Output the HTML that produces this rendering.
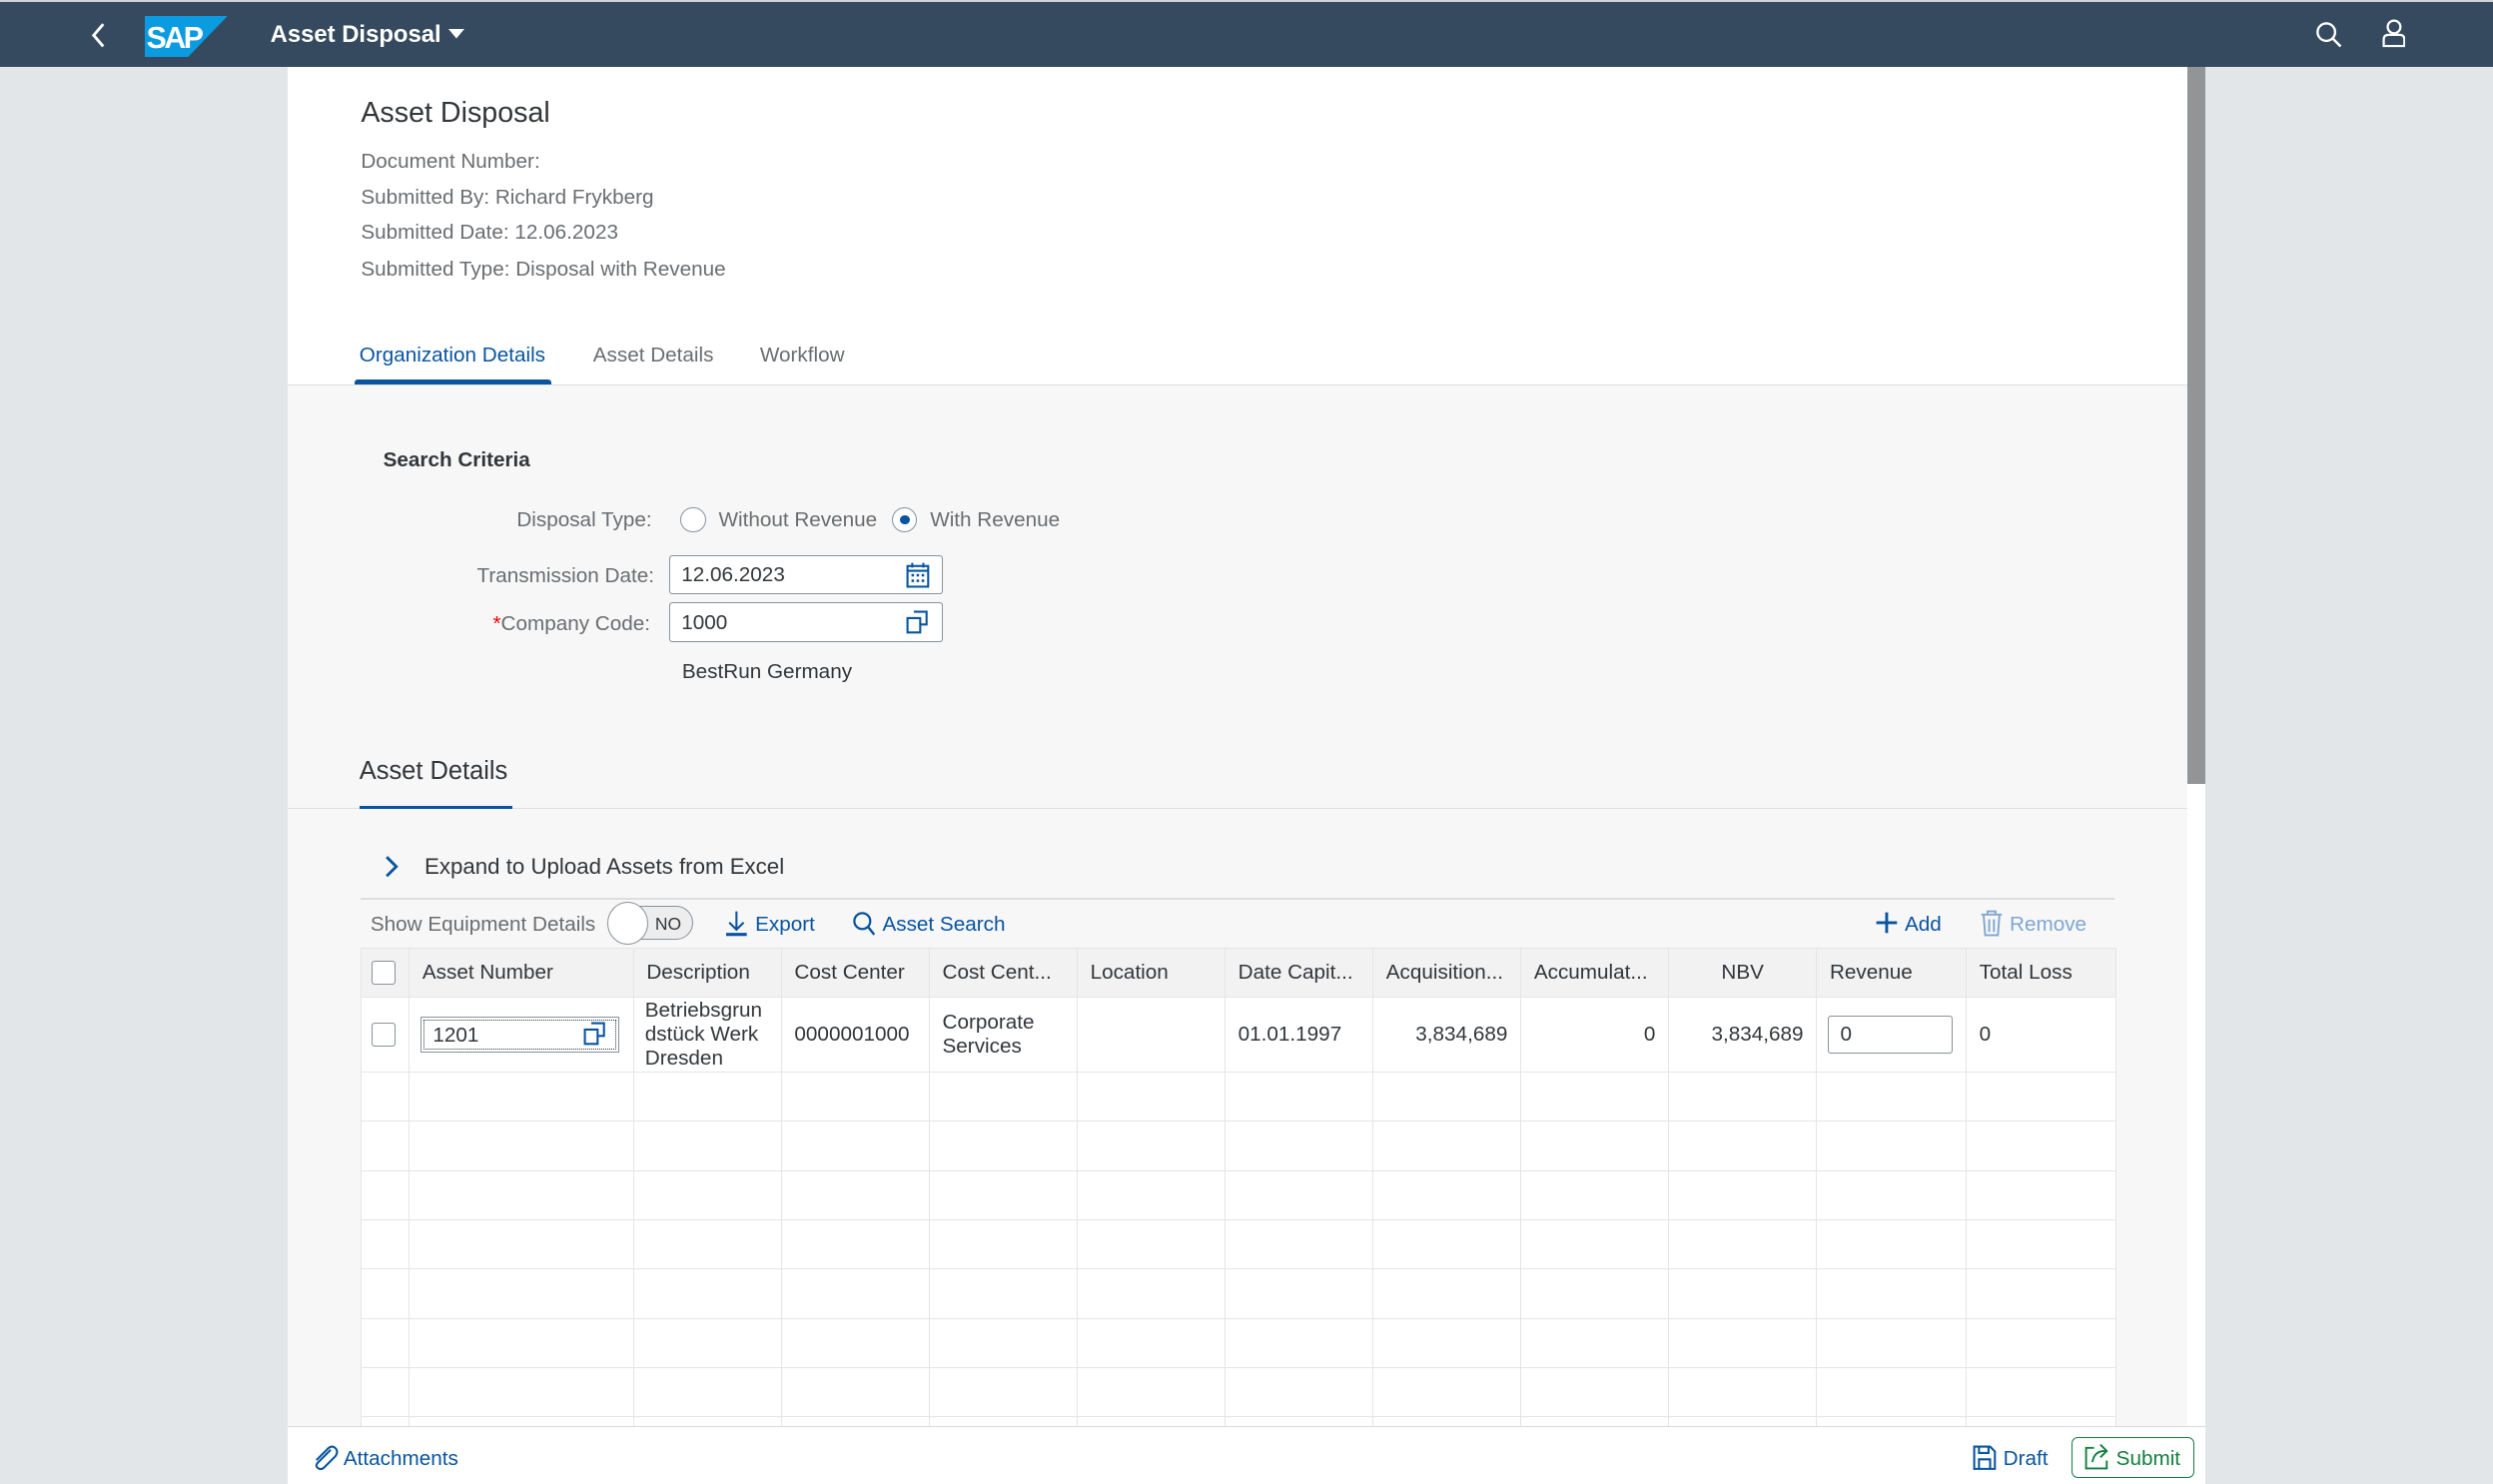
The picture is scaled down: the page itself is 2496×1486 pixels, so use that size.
<!DOCTYPE html>
<html><head><meta charset="utf-8">
<style>
*{margin:0;padding:0;box-sizing:border-box}
html,body{width:2496px;height:1486px;overflow:hidden;background:#e3e6e8}
#r{zoom:1.5918;width:1568px;height:934px;position:relative;font-family:"Liberation Sans",sans-serif;color:#32363a;font-size:13px}
.a{position:absolute;white-space:nowrap}
.hdr{left:0;top:1px;width:1568px;height:41px;background:#354a5f}
.lbl{color:#6a6d70}
.dk{color:#0854a0}
table{border-collapse:collapse;table-layout:fixed}
td,th{border:1px solid #e5e5e5;font-weight:normal;text-align:left;padding:0 8px;overflow:hidden;white-space:nowrap;text-overflow:ellipsis}
th{background:#f2f2f2;height:31px;color:#32363a}
td{background:#fff;height:31px}
.cb{display:inline-block;width:15px;height:15px;border:1px solid #89919a;border-radius:2px;background:#fff;vertical-align:middle}
</style></head><body><div id="r">
<div class="a" style="left:0;top:0;width:1568px;height:1px;background:#cfd3d6"></div>
<div class="a hdr"></div>
<svg class="a" style="left:56px;top:13px" width="12" height="18"><path d="M9 2 L3 9 L9 16" stroke="#fff" stroke-width="1.8" fill="none"/></svg>
<svg class="a" style="left:91px;top:10px" width="52" height="26"><path d="M0 0 H52 L27 26 H0Z" fill="#0b9be1"/><text x="1" y="20" font-family="Liberation Sans" font-weight="bold" font-size="19" fill="#fff" letter-spacing="-1.5">SAP</text></svg>
<div class="a" style="left:170px;top:13px;color:#fff;font-size:15px;font-weight:bold">Asset Disposal</div>
<svg class="a" style="left:282px;top:18px" width="10" height="8"><path d="M0 0H10L5 6Z" fill="#fff"/></svg>
<svg class="a" style="left:1456px;top:13px" width="17" height="17"><circle cx="7" cy="7" r="5.5" stroke="#fff" stroke-width="1.5" fill="none"/><path d="M11 11L16 16" stroke="#fff" stroke-width="1.6"/></svg>
<svg class="a" style="left:1498px;top:12px" width="15" height="18"><circle cx="7.5" cy="5" r="4" stroke="#fff" stroke-width="1.4" fill="none"/><path d="M1 17V13Q1 10 4 10H11Q14 10 14 13V17Z" stroke="#fff" stroke-width="1.4" fill="none"/></svg>

<div class="a" style="left:181px;top:42px;width:1195px;height:200px;background:#fff"></div>
<div class="a" style="left:181px;top:242px;width:1195px;height:656px;background:#f7f7f7;border-top:1px solid #e0e0e0"></div>
<div class="a" style="left:1376px;top:42px;width:11px;height:856px;background:#fff"></div>
<div class="a" style="left:1376px;top:42px;width:11px;height:451px;background:#929496"></div>

<div class="a" style="left:227px;top:61px;font-size:18px">Asset Disposal</div>
<div class="a lbl" style="left:227px;top:94px">Document Number:</div>
<div class="a lbl" style="left:227px;top:117px">Submitted By: Richard Frykberg</div>
<div class="a lbl" style="left:227px;top:139px">Submitted Date: 12.06.2023</div>
<div class="a lbl" style="left:227px;top:162px">Submitted Type: Disposal with Revenue</div>
<div class="a dk" style="left:226px;top:216px">Organization Details</div>
<div class="a lbl" style="left:373px;top:216px">Asset Details</div>
<div class="a lbl" style="left:478px;top:216px">Workflow</div>
<div class="a" style="left:223px;top:239px;width:124px;height:3px;background:#0854a0;border-radius:2px 2px 0 0"></div>

<div class="a" style="left:241px;top:282px;font-weight:bold">Search Criteria</div>
<div class="a lbl" style="left:325px;top:320px">Disposal Type:</div>
<div class="a" style="left:428px;top:319px;width:16px;height:16px;border:1px solid #89919a;border-radius:50%;background:#fff"></div>
<div class="a lbl" style="left:452px;top:320px">Without Revenue</div>
<div class="a" style="left:561px;top:319px;width:16px;height:16px;border:1px solid #89919a;border-radius:50%;background:#fff"></div>
<div class="a" style="left:566px;top:324px;width:6px;height:6px;border-radius:50%;background:#0854a0"></div>
<div class="a lbl" style="left:585px;top:320px">With Revenue</div>
<div class="a lbl" style="left:300px;top:355px">Transmission Date:</div>
<div class="a" style="left:421px;top:349px;width:172px;height:25px;border:1px solid #89919a;background:#fff;border-radius:2px;padding:5px 7px">12.06.2023</div>
<svg class="a" style="left:570px;top:353px" width="15" height="17"><rect x="1" y="3" width="13" height="13" fill="none" stroke="#0854a0" stroke-width="1.3"/><path d="M1 6H14M4 1V4M11 1V4" stroke="#0854a0" stroke-width="1.3"/><g fill="#0854a0"><rect x="3.5" y="8" width="1.6" height="1.6"/><rect x="6.7" y="8" width="1.6" height="1.6"/><rect x="9.9" y="8" width="1.6" height="1.6"/><rect x="3.5" y="11.5" width="1.6" height="1.6"/><rect x="6.7" y="11.5" width="1.6" height="1.6"/><rect x="9.9" y="11.5" width="1.6" height="1.6"/></g></svg>
<div class="a lbl" style="left:310px;top:385px"><span style="color:#e00">*</span>Company Code:</div>
<div class="a" style="left:421px;top:379px;width:172px;height:25px;border:1px solid #89919a;background:#fff;border-radius:2px;padding:5px 7px">1000</div>
<svg class="a" style="left:570px;top:384px" width="15" height="15"><path d="M5 1H13V9H9M1 5H9V14H1Z" fill="none" stroke="#0854a0" stroke-width="1.3"/></svg>
<div class="a" style="left:429px;top:415px">BestRun Germany</div>

<div class="a" style="left:226px;top:476px;font-size:16px">Asset Details</div>
<div class="a" style="left:181px;top:508px;width:1195px;height:1px;background:#e0e0e0"></div>
<div class="a" style="left:226px;top:507px;width:96px;height:2px;background:#0854a0"></div>
<svg class="a" style="left:241px;top:537px" width="10" height="16"><path d="M2 2L8 8L2 14" stroke="#0854a0" stroke-width="1.8" fill="none"/></svg>
<div class="a" style="left:267px;top:537px;font-size:14px">Expand to Upload Assets from Excel</div>
<div class="a" style="left:227px;top:565px;width:1103px;height:1px;background:#ddd"></div>
<div class="a lbl" style="left:233px;top:574px">Show Equipment Details</div>
<div class="a" style="left:383px;top:570px;width:53px;height:21px;border:1px solid #89919a;border-radius:11px;background:#ededed"></div>
<div class="a" style="left:382px;top:567px;width:26px;height:27px;border:1px solid #89919a;border-radius:50%;background:#fff"></div>
<div class="a" style="left:412px;top:575px;font-size:11px">NO</div>
<svg class="a" style="left:457px;top:572px" width="13" height="17"><path d="M6.5 1V12M2 8L6.5 12.5L11 8" stroke="#0854a0" stroke-width="1.3" fill="none"/><path d="M0 15.5H13" stroke="#0854a0" stroke-width="2"/></svg>
<div class="a dk" style="left:475px;top:574px">Export</div>
<svg class="a" style="left:536px;top:573px" width="15" height="16"><circle cx="6.5" cy="6.5" r="5" stroke="#0854a0" stroke-width="1.4" fill="none"/><path d="M10 10L14 15" stroke="#0854a0" stroke-width="1.5"/></svg>
<div class="a dk" style="left:555px;top:574px">Asset Search</div>
<svg class="a" style="left:1179px;top:573px" width="15" height="15"><path d="M7.5 1V14M1 7.5H14" stroke="#0854a0" stroke-width="1.8"/></svg>
<div class="a dk" style="left:1198px;top:574px">Add</div>
<svg class="a" style="left:1245px;top:572px" width="15" height="17"><path d="M1 3H14M5 3V1H10V3M2.5 3L3.5 16H11.5L12.5 3M6 6V14M9 6V14" stroke="#7fa7d3" stroke-width="1.2" fill="none"/></svg>
<div class="a" style="left:1264px;top:574px;color:#7fa7d3">Remove</div>

<table class="a" style="left:227px;top:596px;width:1104px">
<colgroup><col style="width:30px"><col style="width:141px"><col style="width:93px"><col style="width:93px"><col style="width:93px"><col style="width:93px"><col style="width:93px"><col style="width:93px"><col style="width:93px"><col style="width:93px"><col style="width:94px"><col style="width:94px"></colgroup>
<tr><th style="padding:0 6px"><span class="cb"></span></th><th>Asset Number</th><th>Description</th><th>Cost Center</th><th>Cost Cent...</th><th>Location</th><th>Date Capit...</th><th>Acquisition...</th><th>Accumulat...</th><th style="text-align:center">NBV</th><th>Revenue</th><th>Total Loss</th></tr>
<tr style="height:47px"><td style="padding:0 6px"><span class="cb"></span></td>
<td style="padding:0 7px"><div style="position:relative;width:125px;height:23px;border:1px solid #89919a;outline:1px dotted #333;outline-offset:-3px;padding:4px 7px">1201<svg style="position:absolute;right:7px;top:3px" width="15" height="15"><path d="M5 1H13V9H9M1 5H9V14H1Z" fill="none" stroke="#0854a0" stroke-width="1.3"/></svg></div></td>
<td style="white-space:normal;line-height:15px;padding:0 7px">Betriebsgrun dstück Werk Dresden</td><td>0000001000</td><td style="white-space:normal;line-height:15px">Corporate Services</td><td></td><td>01.01.1997</td><td style="text-align:right">3,834,689</td><td style="text-align:right">0</td><td style="text-align:right">3,834,689</td>
<td style="padding:0 7px"><div style="width:78px;height:24px;border:1px solid #89919a;border-radius:2px;padding:4px 7px">0</div></td><td>0</td></tr>
<tr><td></td><td></td><td></td><td></td><td></td><td></td><td></td><td></td><td></td><td></td><td></td><td></td></tr>
<tr><td></td><td></td><td></td><td></td><td></td><td></td><td></td><td></td><td></td><td></td><td></td><td></td></tr>
<tr><td></td><td></td><td></td><td></td><td></td><td></td><td></td><td></td><td></td><td></td><td></td><td></td></tr>
<tr><td></td><td></td><td></td><td></td><td></td><td></td><td></td><td></td><td></td><td></td><td></td><td></td></tr>
<tr><td></td><td></td><td></td><td></td><td></td><td></td><td></td><td></td><td></td><td></td><td></td><td></td></tr>
<tr><td></td><td></td><td></td><td></td><td></td><td></td><td></td><td></td><td></td><td></td><td></td><td></td></tr>
<tr><td></td><td></td><td></td><td></td><td></td><td></td><td></td><td></td><td></td><td></td><td></td><td></td></tr>
<tr><td></td><td></td><td></td><td></td><td></td><td></td><td></td><td></td><td></td><td></td><td></td><td></td></tr>
</table>

<div class="a" style="left:181px;top:897px;width:1206px;height:37px;background:#fff;border-top:1px solid #d9d9d9"></div>
<svg class="a" style="left:196px;top:909px" width="17" height="16"><path d="M12 3L4 11Q2 13 4 14.5Q6 16 8 14L15 7Q17 4 15 2Q13 0 10.5 2L3 9.5" stroke="#0854a0" stroke-width="1.3" fill="none"/></svg>
<div class="a dk" style="left:216px;top:910px">Attachments</div>
<svg class="a" style="left:1241px;top:909px" width="15" height="16"><path d="M1 1H11L14 4V15H1Z M4 1V5H10V1 M4 15V9H11V15" stroke="#0854a0" stroke-width="1.3" fill="none"/></svg>
<div class="a dk" style="left:1260px;top:910px">Draft</div>
<div class="a" style="left:1303px;top:904px;width:77px;height:26px;border:1px solid #107e3e;border-radius:4px;background:#fff"></div>
<svg class="a" style="left:1311px;top:908px" width="17" height="17"><path d="M6 3H1V16H14V11 M5 12Q6 5 13 5M10 1L14 5L10 9" stroke="#107e3e" stroke-width="1.2" fill="none"/></svg>
<div class="a" style="left:1331px;top:910px;color:#107e3e">Submit</div>
</div></body></html>
